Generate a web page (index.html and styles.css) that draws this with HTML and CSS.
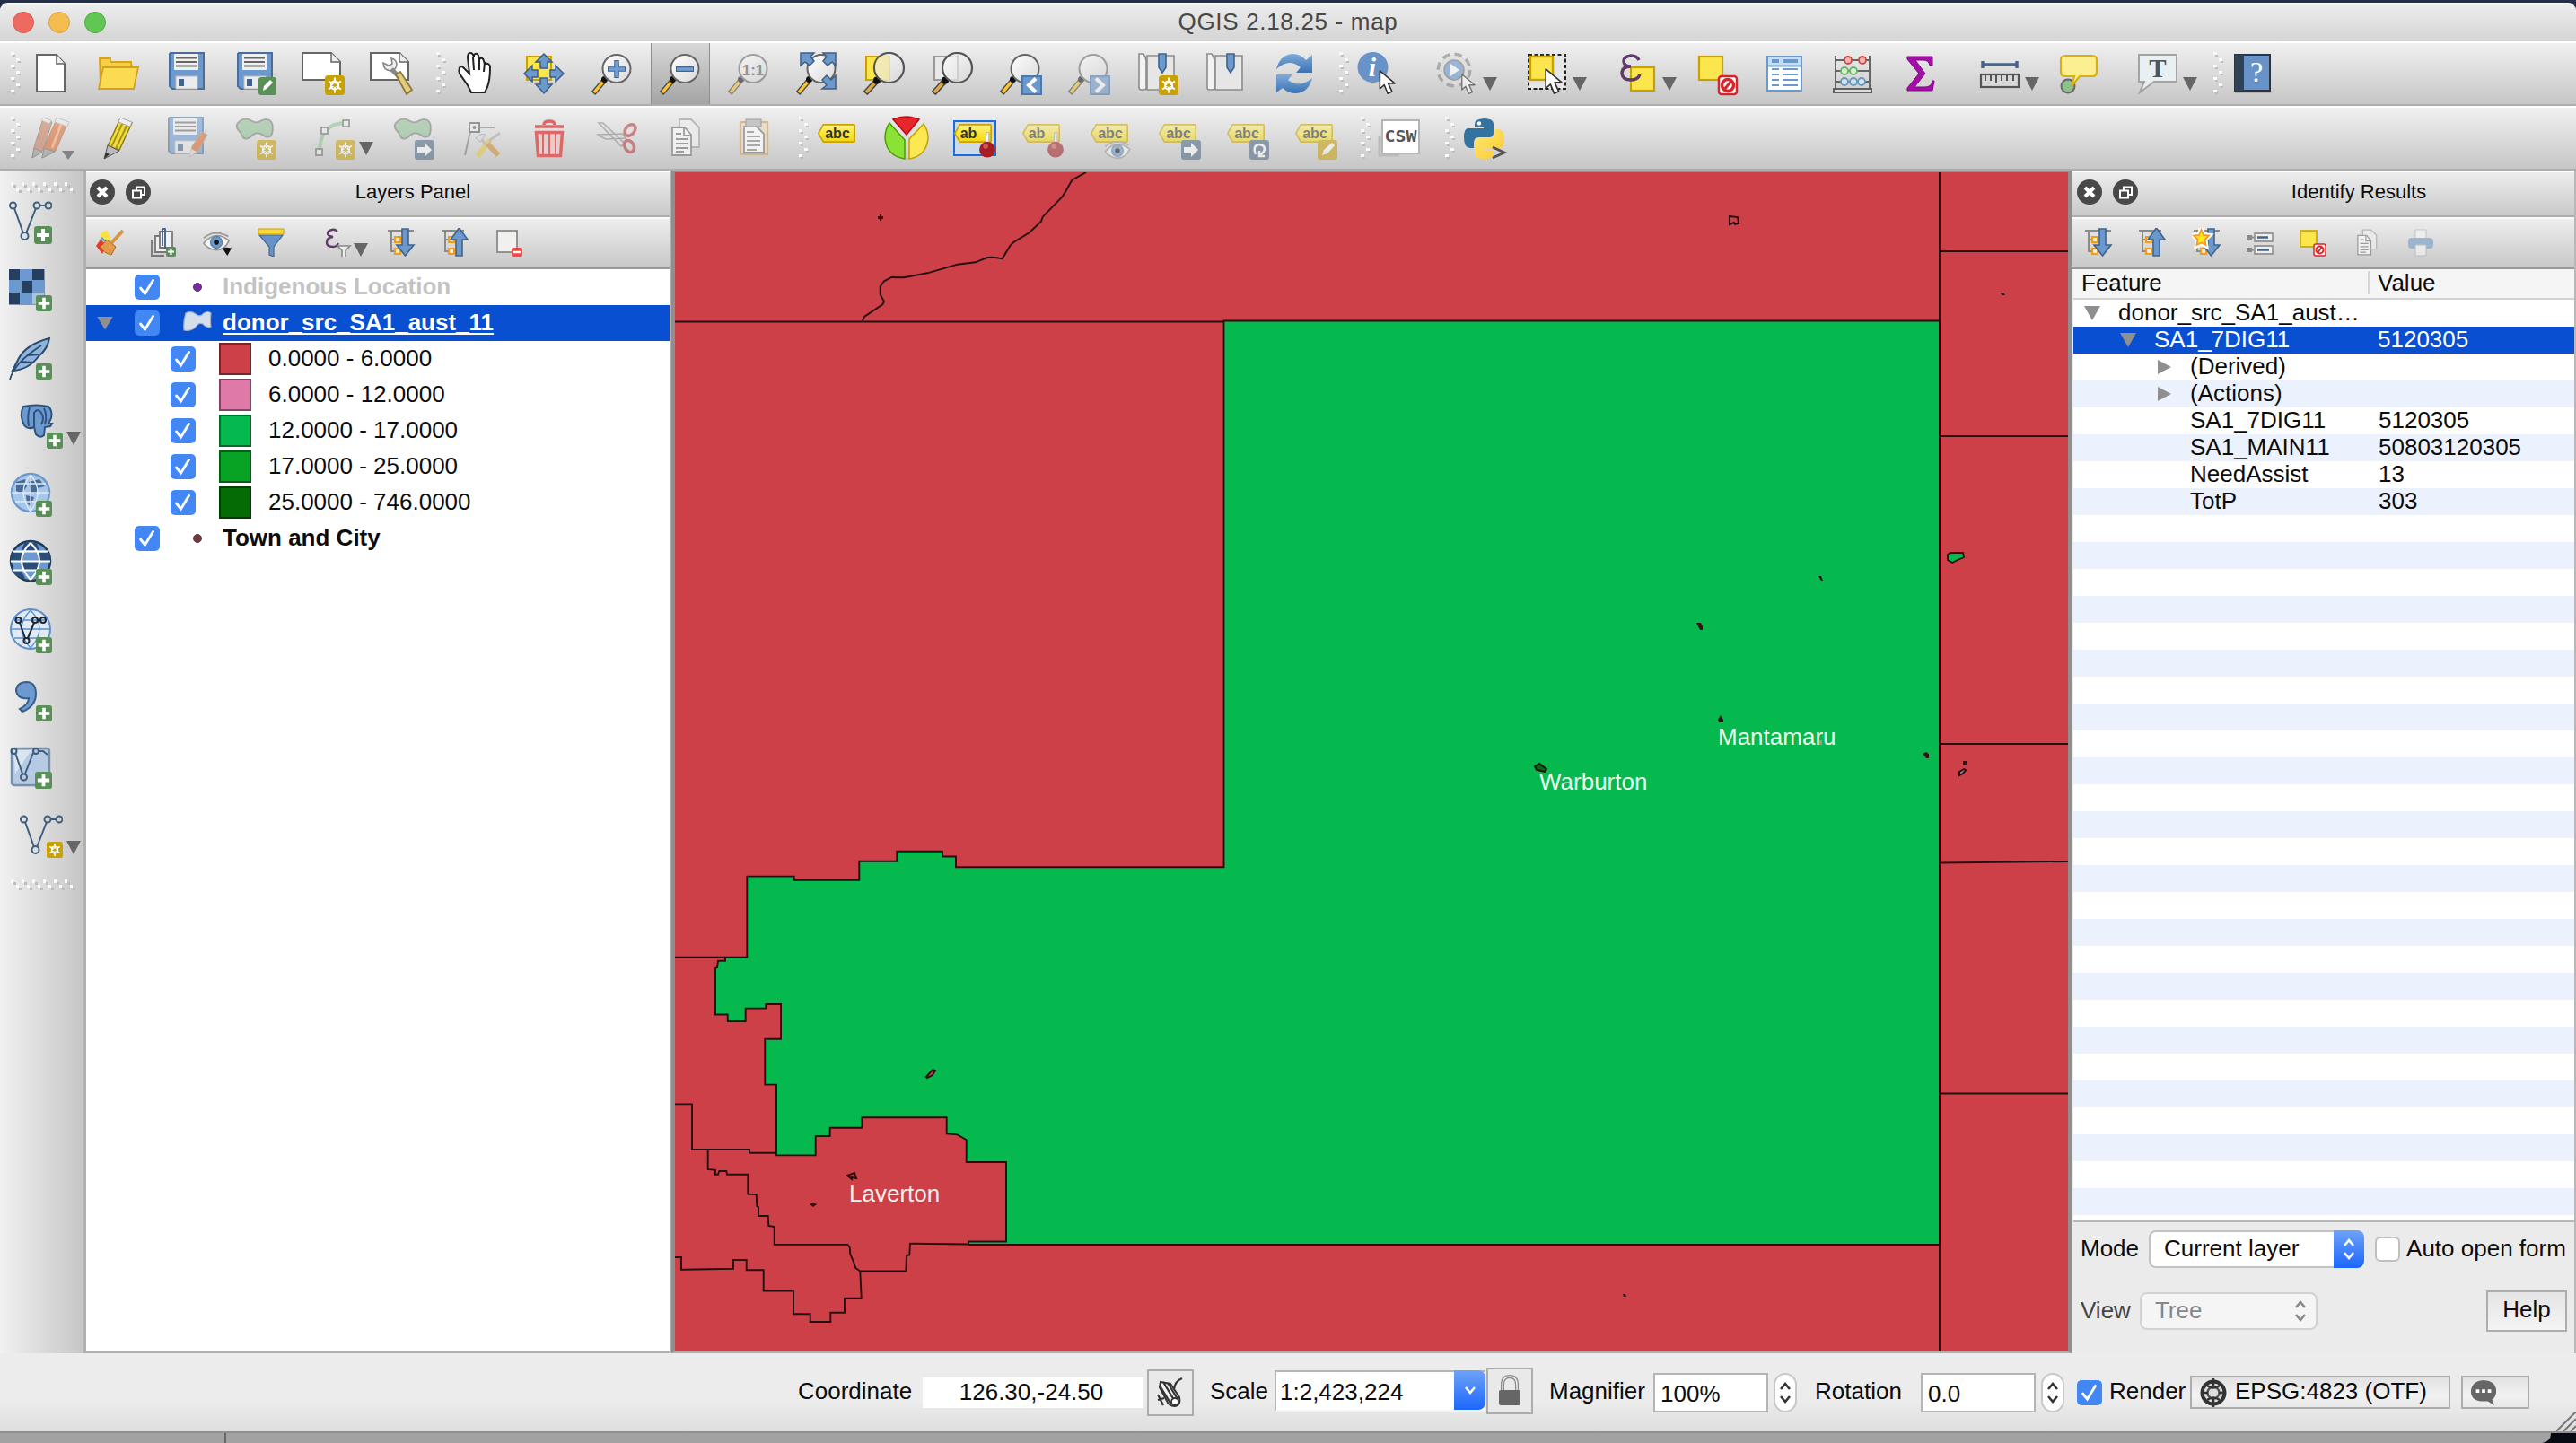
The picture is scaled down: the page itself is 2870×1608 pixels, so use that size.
FILE: index.html
```html
<!DOCTYPE html>
<html lang="en">
<head>
<meta charset="utf-8">
<title>QGIS 2.18.25 - map</title>
<link rel="stylesheet" href="styles.css">
</head>
<body>
<svg class="defs" width="0" height="0">
  <defs>
    <linearGradient id="lensFill" x1="0" y1="0" x2="1" y2="1"><stop offset="0" stop-color="#fff"/><stop offset="1" stop-color="#d9d9d9"/></linearGradient>
    <linearGradient id="tagFill" x1="0" y1="0" x2="0" y2="1"><stop offset="0" stop-color="#fdf08a"/><stop offset=".5" stop-color="#fae63c"/><stop offset="1" stop-color="#f2d60c"/></linearGradient>
    <linearGradient id="blueFill" x1="0" y1="0" x2="0" y2="1"><stop offset="0" stop-color="#7fabd9"/><stop offset="1" stop-color="#3a72b4"/></linearGradient>
    <linearGradient id="pyYellow" x1="0" y1="0" x2="1" y2="1"><stop offset="0" stop-color="#ffe873"/><stop offset="1" stop-color="#fdc92e"/></linearGradient>
    <symbol id="grip" viewBox="0 0 12 48"><g fill="#fafafa"><path d="M0 0h4v3H0zM6 7h4v3H6zM0 14h4v3H0zM6 21h4v3H6zM0 28h4v3H0zM6 35h4v3H6zM0 42h4v3H0z"/></g><g fill="#bdbdbd"><path d="M2 3h3v2H2zM8 10h3v2H8zM2 17h3v2H2zM8 24h3v2H8zM2 31h3v2H2zM8 38h3v2H8zM2 45h3v2H2z"/></g></symbol>
    <symbol id="hgrip" viewBox="0 0 74 12"><g fill="#fafafa"><path d="M0 0h3v4H0zM6 6h3v4H6zM12 0h3v4h-3zM18 6h3v4h-3zM24 0h3v4h-3zM30 6h3v4h-3zM36 0h3v4h-3zM42 6h3v4h-3zM48 0h3v4h-3zM54 6h3v4h-3zM60 0h3v4h-3zM66 6h3v4h-3z"/></g><g fill="#bdbdbd"><path d="M3 3h3v3H3zM9 9h3v3H9zM15 3h3v3h-3zM21 9h3v3h-3zM27 3h3v3h-3zM33 9h3v3h-3zM39 3h3v3h-3zM45 9h3v3h-3zM51 3h3v3h-3zM57 9h3v3h-3zM63 3h3v3h-3zM69 9h3v3h-3z"/></g></symbol>
    <symbol id="drop" viewBox="0 0 16 15"><path d="M0 0h16L8 15z" fill="#666"/></symbol>
    <symbol id="star" viewBox="0 0 22 22"><rect width="22" height="22" rx="3.500" fill="#c8a204"/><path d="M11 2.500V19.500M4 6.500l14 9M18 6.500l-14 9M7 8l4-2 4 2v6l-4 2-4-2z" stroke="#fff" stroke-width="2" fill="none"/><circle cx="11" cy="11" r="2" fill="#c8a204"/></symbol>
    <symbol id="plus" viewBox="0 0 20 20"><rect width="20" height="20" rx="3" fill="#589058"/><path d="M10 3v14M3 10h14" stroke="#fff" stroke-width="4"/></symbol>
    <symbol id="lens" viewBox="0 0 48 48"><path d="M15 32L3 46" stroke="#4a4a4a" stroke-width="6"/><path d="M14 33L4 45" stroke="#fcc42f" stroke-width="3.500"/><circle cx="15.500" cy="30.500" r="3.500" fill="#111"/><circle cx="29" cy="18.500" r="15.500" fill="url(#lensFill)" stroke="#666" stroke-width="2"/></symbol>
    <symbol id="biglens" viewBox="0 0 48 48"><path d="M14 33L2 46" stroke="#444" stroke-width="6.500"/><path d="M12 35L3 45" stroke="#d9a94a" stroke-width="3.500"/><circle cx="15" cy="31.500" r="4" fill="#111"/><circle cx="28.500" cy="17.500" r="16.500" fill="url(#lensFill)" fill-opacity=".75" stroke="#555" stroke-width="2.200"/></symbol>
    <symbol id="cursor" viewBox="0 0 24 32"><path d="M1 1v23l5.500-5 4.500 11 5.500-2.500-5-10.500h8.500z" fill="#fff" stroke="#333" stroke-width="1.800" stroke-linejoin="round"/></symbol>
    <symbol id="floppy" viewBox="0 0 48 48"><path d="M6 1h37v40H8l-3-3V2z" fill="#6c9ad0" stroke="#4a6e97" stroke-width="2"/><rect x="10" y="2" width="27" height="18" rx="1" fill="#f0f0f0"/><path d="M12 6.500h23M12 11h23M12 15.500h23" stroke="#666" stroke-width="2"/><rect x="12" y="27" width="24" height="14" fill="#ececec" stroke="#bbb"/><rect x="15" y="30" width="6" height="8" fill="#3f648f"/></symbol>
    <symbol id="sheet" viewBox="0 0 48 48"><path d="M1 1h32l10 10v20H1z" fill="#fff" stroke="#666" stroke-width="2"/><path d="M33 1v10h10" fill="#eee" stroke="#666" stroke-width="1.500"/></symbol>
    <symbol id="book" viewBox="0 0 48 48"><path d="M12 4h30v38H12z" fill="#e6e6e6" stroke="#8c8c8c" stroke-width="1.600"/><path d="M3 2h5q3 4 3 8v30q0 2-3 2H5q-2 0-2-3z" fill="#f2f2f2" stroke="#8c8c8c" stroke-width="1.600"/><path d="M25 2h8v15l-4 6-4-6z" fill="#6b99cc" stroke="#3f648f" stroke-width="1.600"/></symbol>
    <symbol id="tag" viewBox="0 0 48 24"><path d="M8 1h37q1 0 1 1v19q0 1-1 1H8L2 11.500z" fill="url(#tagFill)" stroke="#c8a204" stroke-width="1.800"/></symbol>
    <symbol id="blob" viewBox="0 0 48 28"><path d="M8 3Q14 0 20 4T33 3Q43 0 45 9 46 18 43 22 38 25 32 20 26 17 21 21 14 28 10 24 8 19 4 15-1 8 8 3z" fill="#8dc293" stroke="#777" stroke-width="2"/></symbol>
    <symbol id="vee" viewBox="0 0 48 48"><g fill="none" stroke="#3f5d7d" stroke-width="2"><path d="M6 8l10 28M19 36L30 8M34 5h7"/><circle cx="4.500" cy="5" r="3.500"/><circle cx="17.500" cy="39" r="4"/><circle cx="31" cy="5" r="3.500"/><circle cx="44" cy="5" r="3.500"/></g></symbol>
    <symbol id="expand" viewBox="0 0 32 32"><path d="M1 3h29M5 3v24M5 13h6M5 26h6" stroke="#8a8a8a" stroke-width="2" fill="none"/><path d="M9 10h6v6H9zM9 23h6v6H9z" fill="#fff2d0" stroke="#f59a1c" stroke-width="2.200"/><path d="M17 1h7v18h6L20.500 31 11 19h6z" fill="#6b99cc" stroke="#3f648f" stroke-width="1.600"/></symbol>
    <symbol id="collapse" viewBox="0 0 32 32"><path d="M1 3h25M5 3v24M5 13h6M5 26h6" stroke="#8a8a8a" stroke-width="2" fill="none"/><path d="M9 10h6v6H9zM9 23h6v6H9z" fill="#fff2d0" stroke="#f59a1c" stroke-width="2.200"/><path d="M17 31h7V13h6L20.500 0 11 13h6z" fill="#6b99cc" stroke="#3f648f" stroke-width="1.600"/></symbol>
    <symbol id="check" viewBox="0 0 28 28"><rect width="28" height="28" rx="5" fill="#4387f4"/><path d="M6.500 15l5 6L20.500 6.500" fill="none" stroke="#fff" stroke-width="2.800" stroke-linecap="round"/></symbol>
    <symbol id="close" viewBox="0 0 28 28"><circle cx="14" cy="14" r="14" fill="#484848"/><path d="M9 9l10 10M19 9L9 19" stroke="#fff" stroke-width="4"/></symbol>
    <symbol id="float" viewBox="0 0 28 28"><circle cx="14" cy="14" r="14" fill="#484848"/><path d="M12 12V8.500h9V17h-4" fill="none" stroke="#fff" stroke-width="2"/><rect x="8" y="12.500" width="9" height="8" fill="none" stroke="#fff" stroke-width="2"/></symbol>
    <symbol id="updown" viewBox="0 0 16 28"><path d="M3 10l5-6 5 6M3 18l5 6 5-6" fill="none" stroke="currentColor" stroke-width="2.600"/></symbol>
    <symbol id="pages" viewBox="0 0 48 48"><path d="M17 3h13l9 9v22H17z" fill="#eee" stroke="#aaa" stroke-width="1.800"/><path d="M9 12h14l7 8v23H9z" fill="#f8f8f8" stroke="#888" stroke-width="1.800"/><path d="M22 12v9h8M13 19h6M13 25h13M13 30h13M13 35h13M13 39h9" fill="none" stroke="#888" stroke-width="1.800"/></symbol>
    <symbol id="gobadge" viewBox="0 0 22 22"><rect width="22" height="22" rx="3" fill="#4b6883"/><path d="M3 8h8V3l8 8-8 8v-5H3z" fill="#fff"/></symbol>
    <symbol id="pin" viewBox="0 0 20 32"><path d="M9 0h3v14H8z" fill="#fff" stroke="#999" stroke-width="1"/><circle cx="10" cy="21" r="9.500" fill="#a51d22"/><circle cx="8" cy="17" r="3" fill="#c65a5c"/></symbol>
    <symbol id="eye" viewBox="0 0 32 24"><path d="M1 13Q15-3 31 10 26 22 14 21 5 19 1 13z" fill="#f4f4f4" stroke="#999" stroke-width="1.800"/><path d="M1 7Q14-4 30 5" fill="none" stroke="#999" stroke-width="2"/><circle cx="16" cy="12" r="7" fill="#6b99cc" stroke="#5b7da5" stroke-width="1.200"/><circle cx="16" cy="12" r="3" fill="#10151c"/></symbol>
  </defs>
</svg>

<div class="window">
  <header class="titlebar">
    <div class="lights"><i class="light red"></i><i class="light amber"></i><i class="light green"></i></div>
    <h1 class="window-title">QGIS 2.18.25 - map</h1>
  </header>

  <div class="toolbar">
    <span class="slot"><svg class="grip"><use href="#grip"/></svg></span>
    <span class="btn"><svg class="icon" viewBox="0 0 48 48"><path d="M9 3h22l9 10v31H9z" fill="#fff" stroke="#666" stroke-width="2"/><path d="M31 3v10h9" fill="#eee" stroke="#666" stroke-width="1.600"/></svg></span>
    <span class="btn"><svg class="icon" viewBox="0 0 48 48"><path d="M3 7h12v4h23l1 7H8L4 40z" fill="#f7cf45" stroke="#d3a21f" stroke-width="1.800"/><path d="M7 17h39l-5 24H2z" fill="#fbdb52" stroke="#d3a21f" stroke-width="1.800"/></svg></span>
    <span class="btn"><svg class="icon" viewBox="0 0 48 48"><use href="#floppy"/></svg></span>
    <span class="btn"><svg class="icon" viewBox="0 0 48 48"><use href="#floppy"/><rect x="28" y="28" width="20" height="20" rx="3" fill="#589058"/><path d="M33 43l1-5 7-7 3 3-7 7z" fill="#fff"/></svg></span>
    <span class="btn"><svg class="icon" viewBox="0 0 48 48"><use href="#sheet"/><use href="#star" x="26" y="26" width="22" height="22"/></svg></span>
    <span class="btn"><svg class="icon" viewBox="0 0 48 48"><use href="#sheet"/><path d="M15 12q0 8 8 9 7-1 7-8-1-5-6-6l1 6-4 2z" fill="#eee" stroke="#888" stroke-width="1.600"/><path d="M24 19l8 8" stroke="#888" stroke-width="5"/><path d="M29 25l5-3 13 20-6 5z" fill="#e3cd7d" stroke="#8d7a3c" stroke-width="1.800"/></svg></span>
    <span class="slot"><svg class="grip"><use href="#grip"/></svg></span>
    <span class="btn"><svg class="icon" viewBox="0 0 48 48"><path d="M19 45l-4-8-9-13q-2-8 3-8l8 8-2-18q0-5 3-5t4 5V3q3-3 5 1l1 4q4-3 5 2l1 3q6-1 6 4 0 14-3 22l-3 6z" fill="#fff" stroke="#222" stroke-width="2"/><path d="M21 6l1 14M28 8v12M34 11l-1 11" stroke="#222" stroke-width="2"/></svg></span>
    <span class="btn"><svg class="icon" viewBox="0 0 48 48"><rect x="5" y="5" width="27" height="26" fill="#fbe74d" stroke="#c8a204" stroke-width="2"/><g fill="#6b99cc" stroke="#3b5e8a" stroke-width="1.500"><path d="M24 2l9 9h-5v7h-8v-7h-5z"/><path d="M24 46l9-10h-5v-7h-8v7h-5z"/><path d="M2 24l9-9v5h6v8h-6v5z"/><path d="M46 24l-9-9v5h-6v8h6v5z"/></g></svg></span>
    <span class="btn"><svg class="icon" viewBox="0 0 48 48"><use href="#lens"/><path d="M29 9v20M19 19h20" stroke="#3f648f" stroke-width="5.500"/><path d="M29 10v18M20 19h18" stroke="#6f9fd4" stroke-width="3.500"/></svg></span>
    <span class="btn pressed"><svg class="icon" viewBox="0 0 48 48"><use href="#lens"/><path d="M19 19h20" stroke="#3f648f" stroke-width="6"/><path d="M20 19h18" stroke="#6f9fd4" stroke-width="3.500"/></svg></span>
    <span class="btn dim"><svg class="icon" viewBox="0 0 48 48"><use href="#lens"/><text x="29" y="26" class="one" text-anchor="middle">1:1</text></svg></span>
    <span class="btn"><svg class="icon" viewBox="0 0 48 48"><use href="#lens"/><g fill="#6b99cc" stroke="#3f5d85" stroke-width="1.500"><path d="M6 1h15l-4 4 4 5-5 5-5-4-5 4z"/><path d="M45 1v14l-4-4-5 4-5-5 4-5-4-4z"/><path d="M45 41H30l5-4-5-6 5-5 5 5 5-5z"/></g></svg></span>
    <span class="btn"><svg class="icon" viewBox="0 0 48 48"><rect x="3" y="5" width="26" height="26" fill="#fbe74d" stroke="#c8a204" stroke-width="2"/><use href="#biglens"/><path d="M17 6q5-3 12-3v29q-8 0-12-4-8-12 0-22z" fill="#f0e6a8" opacity=".7"/></svg></span>
    <span class="btn"><svg class="icon" viewBox="0 0 48 48"><rect x="3" y="5" width="26" height="26" fill="#e8e8e8" stroke="#999" stroke-width="2"/><use href="#biglens"/><path d="M29 2v31" stroke="#ccc" stroke-width="1.500"/></svg></span>
    <span class="btn"><svg class="icon" viewBox="0 0 48 48"><use href="#lens" x="-1" y="0"/><rect x="25" y="27" width="21" height="20" fill="#6b99cc" stroke="#4c78ad" stroke-width="2"/><path d="M40 29.500l-8 7.500 8 7.500" fill="none" stroke="#fff" stroke-width="4"/></svg></span>
    <span class="btn dim"><svg class="icon" viewBox="0 0 48 48"><use href="#lens" x="-1" y="0"/><rect x="25" y="27" width="21" height="20" fill="#6b99cc" stroke="#4c78ad" stroke-width="2"/><path d="M31 29.500l8 7.500-8 7.500" fill="none" stroke="#fff" stroke-width="4"/></svg></span>
    <span class="btn"><svg class="icon" viewBox="0 0 48 48"><use href="#book"/><use href="#star" x="25" y="26" width="22" height="22"/></svg></span>
    <span class="btn"><svg class="icon" viewBox="0 0 48 48"><use href="#book"/></svg></span>
    <span class="btn"><svg class="icon" viewBox="0 0 48 48"><path d="M4 19Q8 3 22 2q9 0 15 7l7-6v20H26l5-6Q18 6 4 19z" fill="url(#blueFill)"/><path d="M44 29Q40 45 26 46q-9 0-15-6l-7 5V25h18l-5 6q12 10 27-2z" fill="url(#blueFill)"/></svg></span>
    <span class="slot"><svg class="grip"><use href="#grip"/></svg></span>
    <span class="btn"><svg class="icon" viewBox="0 0 48 48"><circle cx="17.500" cy="17" r="17" fill="#6793c9"/><text x="17" y="27" class="info" text-anchor="middle">i</text><use href="#cursor" x="24" y="20" width="22" height="28"/></svg></span>
    <span class="btn wide"><svg class="icon gear" viewBox="0 0 48 48"><circle cx="20" cy="20" r="17" fill="#ddd" stroke="#888" stroke-width="5" stroke-dasharray="8 5.350"/><circle cx="20" cy="20" r="16" fill="#dedede"/><circle cx="20" cy="20" r="11" fill="#6c9ad0" stroke="#777" stroke-width="1.500"/><path d="M16 13l10 7-10 7z" fill="#fff"/><use href="#cursor" x="27" y="24" width="20" height="24"/></svg><svg class="drop"><use href="#drop"/></svg></span>
    <span class="btn wide"><svg class="icon" viewBox="0 0 48 48"><rect x="3" y="3" width="41" height="38" fill="#e6e6e6" stroke="#222" stroke-width="2" stroke-dasharray="4 2.500"/><rect x="5" y="5" width="25" height="26" fill="#fbe74d" stroke="#c8a204" stroke-width="2.400"/><use href="#cursor" x="19" y="18" width="27" height="30"/></svg><svg class="drop"><use href="#drop"/></svg></span>
    <span class="btn wide"><svg class="icon" viewBox="0 0 48 48"><rect x="17" y="17" width="26" height="26" fill="#fbe74d" stroke="#c8a204" stroke-width="2.200"/><path d="M26 9q-2-5-9-5-8 1-8 6 0 6 8 6-10 0-10 8 1 7 10 7 8 0 10-6" fill="none" stroke="#5d3a68" stroke-width="3.500"/></svg><svg class="drop"><use href="#drop"/></svg></span>
    <span class="btn"><svg class="icon" viewBox="0 0 48 48"><rect x="5" y="5" width="26" height="26" fill="#fbe74d" stroke="#c8a204" stroke-width="2.200"/><rect x="27" y="27" width="20" height="20" rx="3" fill="#fff" stroke="#d8252a" stroke-width="2.500"/><circle cx="37" cy="37" r="6.500" fill="none" stroke="#d8252a" stroke-width="3.500"/><path d="M33 42l8-10" stroke="#d8252a" stroke-width="3"/></svg></span>
    <span class="btn"><svg class="icon" viewBox="0 0 48 48"><rect x="5" y="5" width="38" height="38" fill="#fff" stroke="#6b99cc" stroke-width="2"/><rect x="6" y="6" width="36" height="9" fill="#c5def2"/><path d="M5 15.500h38" stroke="#6b99cc" stroke-width="2"/><path d="M10 10h8M22 10h17" stroke="#6b99cc" stroke-width="4"/><path d="M10 19h8M22 19h17M10 25h8M22 25h17M10 31h8M22 31h17M10 37h8M22 37h17" stroke="#6b99cc" stroke-width="2"/></svg></span>
    <span class="btn"><svg class="icon" viewBox="0 0 48 48"><path d="M5 4v37M43 4v37M5 9h38M5 21h38M5 33h38" stroke="#666" stroke-width="2"/><rect x="3" y="41" width="42" height="4" fill="#ddd" stroke="#555" stroke-width="1.800"/><g stroke-width="1.800"><g fill="#f0b5b0" stroke="#c64b4b"><circle cx="19" cy="9" r="4"/><circle cx="35" cy="9" r="4"/></g><g fill="#d3efce" stroke="#72b372"><circle cx="15" cy="21" r="4"/><circle cx="25" cy="21" r="4"/></g><g fill="#cfe2f2" stroke="#6b99bc"><circle cx="15" cy="33" r="4"/><circle cx="25" cy="33" r="4"/><circle cx="34" cy="33" r="4"/></g></g></svg></span>
    <span class="btn"><svg class="icon" viewBox="0 0 48 48"><path d="M9 5h28v10h-3q-1-6-7-6h-9l11 15-12 15h12q7 0 8-7h2l-2 11H9v-3l13-16L9 8z" fill="#a50da8" stroke="#7c0a80" stroke-width="1"/></svg></span>
    <span class="btn wide"><svg class="icon" viewBox="0 0 48 48"><path d="M5 14h38M5 10v8M43 10v8" stroke="#4a6587" stroke-width="3.500"/><rect x="3" y="25" width="42" height="14" fill="#d8d8d8" stroke="#555" stroke-width="2.200"/><path d="M8 26v6M14 26v6M20 26v9M26 26v6M32 26v6M39 26v6" stroke="#555" stroke-width="2"/></svg><svg class="drop"><use href="#drop"/></svg></span>
    <span class="btn"><svg class="icon" viewBox="0 0 48 48"><circle cx="12" cy="38" r="7.500" fill="#8dc08d" stroke="#666" stroke-width="2"/><path d="M9 4h30q5 0 5 5v13q0 5-5 5h-14l-9 11 3-11h-10q-5 0-5-5V9q0-5 5-5z" fill="#fbef8f" stroke="#d8b010" stroke-width="2.200"/></svg></span>
    <span class="btn wide"><svg class="icon" viewBox="0 0 48 48"><path d="M3 3h42v30H20L4 45l5-12H3z" fill="#e9f0f3" stroke="#a3a3a3" stroke-width="2"/><text x="24" y="28" class="tee" text-anchor="middle">T</text></svg><svg class="drop"><use href="#drop"/></svg></span>
    <span class="slot"><svg class="grip"><use href="#grip"/></svg></span>
    <span class="btn"><svg class="icon" viewBox="0 0 48 48"><path d="M4 44h40" stroke="#999" stroke-width="3"/><rect x="4" y="3" width="39" height="40" fill="#6793c9" stroke="#2a3444" stroke-width="2"/><path d="M4 3h10v40H4z" fill="#2f4256"/><text x="28" y="33" class="qmark" text-anchor="middle">?</text></svg></span>
  </div>

  <div class="toolbar">
    <span class="slot"><svg class="grip"><use href="#grip"/></svg></span>
    <span class="btn dim"><svg class="icon" viewBox="0 0 48 48"><path d="M4 46l2-12L16 2l10 4-10 31z" fill="#c77c5c" stroke="#8a6a58"/><path d="M15 46l2-12L31 3l12 5-13 30z" fill="#e0662a" stroke="#8a6a58"/><path d="M26 35L37 6" stroke="#f3a973" stroke-width="3"/><path d="M31 1l14 5-2 5-14-5zM16 1l9 3-2 4-9-4z" fill="#eee" stroke="#aaa"/><path d="M15 46l2-11 12 4zM4 46l2-11 9 4z" fill="#999" stroke="#666"/><path d="M37 38h14l-7 10z" fill="#444"/></svg></span>
    <span class="btn"><svg class="icon" viewBox="0 0 48 48"><path d="M12 33L26 2l13 5-14 30z" fill="#f0dc3c" stroke="#8e7b13" stroke-width="1.500"/><path d="M16 34L30 4M21 36L35 6" stroke="#a8951b" stroke-width="2"/><path d="M26 1l13 5-2 5-13-5z" fill="#eee" stroke="#aaa"/><path d="M8 47l4-15 13 6z" fill="#bbb" stroke="#555"/><path d="M8 47l2-7 4 2z" fill="#333"/></svg></span>
    <span class="btn dim"><svg class="icon" viewBox="0 0 48 48"><use href="#floppy" x="-1"/><path d="M27 45l3-12 11-16 6 3-10 18z" fill="#e0662a" stroke="#999"/><path d="M27 45l2-9 6 3z" fill="#ddd"/></svg></span>
    <span class="btn dim"><svg class="icon" viewBox="0 0 48 48"><use href="#blob" x="1" y="1" width="46" height="26"/><use href="#star" x="26" y="26" width="22" height="22"/></svg></span>
    <span class="btn wide"><svg class="icon dim" viewBox="0 0 48 48"><path d="M8 40Q8 8 36 7" fill="none" stroke="#8dc293" stroke-width="4"/><g fill="#eee" stroke="#666" stroke-width="1.800"><rect x="4" y="36" width="7" height="7"/><rect x="10" y="12" width="7" height="7"/><rect x="34" y="4" width="7" height="7"/></g><use href="#star" x="26" y="26" width="22" height="22"/></svg><svg class="drop"><use href="#drop"/></svg></span>
    <span class="btn dim"><svg class="icon" viewBox="0 0 48 48"><use href="#blob" x="1" y="1" width="46" height="26"/><use href="#gobadge" x="26" y="26" width="22" height="22"/></svg></span>
    <span class="btn dim"><svg class="icon" viewBox="0 0 48 48"><path d="M6 43L12 16M19 12h20" stroke="#777" stroke-width="2"/><rect x="11" y="7" width="11" height="10" fill="#eee" stroke="#555" stroke-width="2"/><circle cx="16.500" cy="12" r="2" fill="#555"/><path d="M20 44l14-18" stroke="#e6c83a" stroke-width="6"/><path d="M33 27l12-9M29 31l-7-9" stroke="#aaa" stroke-width="3"/><path d="M31 30l12 13" stroke="#d08a30" stroke-width="6"/><path d="M18 24q5-6 11-4l-6 8z" fill="#ddd" stroke="#999"/></svg></span>
    <span class="btn"><svg class="icon" viewBox="0 0 48 48"><path d="M8 11h32M18 9q0-4 6-4t6 4" fill="none" stroke="#dc6868" stroke-width="3.500"/><path d="M9.500 17.500h29l-2 26h-25z" fill="#e6cdcd" stroke="#dc6868" stroke-width="3.500"/><path d="M17 19v23M24 19v23M31 19v23" stroke="#dc6868" stroke-width="2"/></svg></span>
    <span class="btn dim"><svg class="icon" viewBox="0 0 48 48"><path d="M3 7l5 0 24 23-4 3zM1 20l29-1 3 5-22 1z" fill="#ddd" stroke="#888" stroke-width="1.600"/><ellipse cx="38" cy="15" rx="5" ry="7" transform="rotate(40 38 15)" fill="none" stroke="#b8363c" stroke-width="3.500"/><ellipse cx="37" cy="33" rx="5" ry="7" transform="rotate(-30 37 33)" fill="none" stroke="#b8363c" stroke-width="3.500"/></svg></span>
    <span class="btn soft"><svg class="icon" viewBox="0 0 48 48"><use href="#pages"/></svg></span>
    <span class="btn soft"><svg class="icon" viewBox="0 0 48 48"><rect x="9" y="6" width="30" height="36" fill="#ecdcc6" stroke="#d1ab78" stroke-width="2.200"/><path d="M13 11h14l8 8v21H13z" fill="#fafafa" stroke="#888" stroke-width="1.800"/><rect x="15" y="3" width="17" height="8" fill="#bbb" stroke="#888"/><path d="M16 17h8M16 22h15M16 27h15M16 32h15M16 37h11" stroke="#999" stroke-width="1.800"/></svg></span>
    <span class="slot"><svg class="grip"><use href="#grip"/></svg></span>
    <span class="btn"><svg class="icon" viewBox="0 0 48 48"><use href="#tag" x="0" y="8" width="44" height="22"/><text x="23" y="24" class="abc" text-anchor="middle">abc</text></svg></span>
    <span class="btn"><svg class="icon" viewBox="0 0 48 48"><path d="M9 3q14-6 29 0L24 20z" fill="#e8252a" stroke="#b01217" stroke-width="1.500"/><path d="M5 7l17 19v21Q2 44 0 24 0 14 5 7z" fill="#8ae234" stroke="#4e9a06" stroke-width="1.500"/><path d="M43 8L27 25v22q19-3 21-23 0-9-5-16z" fill="#fce94f" stroke="#c4a000" stroke-width="1.500"/></svg></span>
    <span class="btn"><svg class="icon" viewBox="0 0 48 48"><rect x="1" y="5" width="46" height="38" fill="#cfdae6" stroke="#1a6be0" stroke-width="2"/><use href="#tag" x="0" y="8" width="44" height="22"/><text x="17" y="24" class="abc" text-anchor="middle">ab</text><use href="#pin" x="28" y="17" width="20" height="30"/></svg></span>
    <span class="btn dim"><svg class="icon" viewBox="0 0 48 48"><use href="#tag" x="0" y="8" width="44" height="22"/><text x="17" y="24" class="abc" text-anchor="middle">ab</text><use href="#pin" x="28" y="17" width="20" height="30"/></svg></span>
    <span class="btn dim"><svg class="icon" viewBox="0 0 48 48"><use href="#tag" x="0" y="8" width="44" height="22"/><text x="23" y="24" class="abc" text-anchor="middle">abc</text><use href="#eye" x="15" y="27" width="32" height="22"/></svg></span>
    <span class="btn dim"><svg class="icon" viewBox="0 0 48 48"><use href="#tag" x="0" y="8" width="44" height="22"/><text x="23" y="24" class="abc" text-anchor="middle">abc</text><use href="#gobadge" x="26" y="26" width="22" height="22"/></svg></span>
    <span class="btn dim"><svg class="icon" viewBox="0 0 48 48"><use href="#tag" x="0" y="8" width="44" height="22"/><text x="23" y="24" class="abc" text-anchor="middle">abc</text><rect x="26" y="26" width="22" height="22" rx="3" fill="#4b6883"/><path d="M33 42q-4-10 4-11 8 1 5 8l-5 5M37 38v6h6" fill="none" stroke="#fff" stroke-width="2.500"/></svg></span>
    <span class="btn dim"><svg class="icon" viewBox="0 0 48 48"><use href="#tag" x="0" y="8" width="44" height="22"/><text x="23" y="24" class="abc" text-anchor="middle">abc</text><rect x="26" y="26" width="22" height="22" rx="3" fill="#c8a204"/><path d="M31 43l2-6 9-8 3 3-8 9z" fill="#fff"/></svg></span>
    <span class="slot"><svg class="grip"><use href="#grip"/></svg></span>
    <span class="btn"><svg class="icon" viewBox="0 0 48 48"><path d="M1 22v21h22" fill="none" stroke="#bbb" stroke-width="3"/><rect x="4" y="4" width="41" height="37" fill="#fff" stroke="#b5b5b5" stroke-width="2"/><text x="24.500" y="28" class="csw" text-anchor="middle" textLength="36" lengthAdjust="spacingAndGlyphs">CSW</text></svg></span>
    <span class="slot"><svg class="grip"><use href="#grip"/></svg></span>
    <span class="btn"><svg class="icon" viewBox="0 0 48 48"><path d="M13 12V8q0-5 10-6 11 0 11 6v10q0 5-5 5H18q-6 0-6 6v6H8q-7 0-7-12t7-10h15v-1z" fill="#34729f"/><circle cx="18" cy="7.500" r="2.200" fill="#fff"/><path d="M36 14h3q7 0 7 11t-7 11H24v2h10v4q-1 5-10 5-11 0-11-6V30q0-6 6-6h10q6 0 6-6z" fill="url(#pyYellow)"/><path d="M33 34l13 6-13 6" fill="none" stroke="#555" stroke-width="2.800"/></svg></span>
  </div>

  <main class="workspace">
    <aside class="sidebar">
      <svg class="hgrip"><use href="#hgrip"/></svg>
      <div class="side-item"><svg class="icon" viewBox="0 0 48 48"><use href="#vee"/><use href="#plus" x="28" y="28" width="20" height="20"/></svg></div>
      <div class="side-item"><svg class="icon" viewBox="0 0 48 48"><rect width="40" height="40" fill="#6c9ad0"/><path d="M0 0h12v12H0zM26 0h13v12H26zM14 13h12v13H14zM0 26h12v13H0z" fill="#263f5e"/><path d="M26 26h13v13H26z" fill="#a9c2df"/><use href="#plus" x="30" y="29" width="18" height="18"/></svg></div>
      <div class="side-item"><svg class="icon" viewBox="0 0 48 48"><path d="M45 1Q18 8 10 25L4 37Q22 36 33 21 43 13 45 1z" fill="#8fb4de" stroke="#2d4b6d" stroke-width="2"/><path d="M1 47Q6 28 36 9M13 27l14 1M20 20l14-1" fill="none" stroke="#2d4b6d" stroke-width="1.800"/><use href="#plus" x="30" y="29" width="18" height="18"/></svg></div>
      <div class="side-item shifted"><svg class="icon" viewBox="0 0 48 48"><path d="M4 1Q18-2 32 1 37 6 35 14L32 20H36L34 23 28 24 27 33Q23 37 18 32L16 24Q9 27 5 22-1 10 4 1z" fill="#6c9ad0" stroke="#2f527d" stroke-width="2"/><path d="M11 2q-3 10-1 21M16 24V8q4-6 8 0 4 6 0 13M27 3q4 8 1 18" fill="none" stroke="#2f527d" stroke-width="2"/><use href="#plus" x="30" y="30" width="18" height="18"/></svg><svg class="drop"><use href="#drop"/></svg></div>
      <div class="side-item"><svg class="icon" viewBox="0 0 48 48"><circle cx="24" cy="21" r="21" fill="#a8c6e8" stroke="#6b99cc" stroke-width="2.400"/><path d="M8 9l10-3 2 8-6 8-6-3zM22 9l12-3 6 8-8 2-2 7-6-2zM19 24l9 2-4 10-4-3z" fill="#30557f" opacity=".8"/><path d="M3 21h42M7 31h34M7 11h34M24 1v41M24 1q-16 19 0 41M24 1q16 19 0 41" fill="none" stroke="#dceaf8" stroke-width="1.300"/><use href="#plus" x="30" y="30" width="18" height="18"/></svg></div>
      <div class="side-item"><svg class="icon" viewBox="0 0 48 48"><circle cx="24" cy="21" r="22" fill="#6c9ad0" stroke="#243b59" stroke-width="2.500"/><path d="M17 1h14l3 8H14zM3 12h11v9H2zM15 22h18v9H15zM34 12h11l1 9H34zM3 32h11l4 9Q8 40 3 32z" fill="#2c4d78"/><path d="M2 21.500h44M5 10.500h38M5 31.500h38M24 1Q4 20 24 42M24 1q20 19 0 41" fill="none" stroke="#fff" stroke-width="2"/><use href="#plus" x="30" y="30" width="18" height="18"/></svg></div>
      <div class="side-item"><svg class="icon" viewBox="0 0 48 48"><circle cx="24" cy="21" r="22" fill="#e2eaf3" stroke="#5a8fd0" stroke-width="2"/><path d="M2 21h44M6 11h36M6 31h36M24 0Q4 20 24 42M24 0q20 20 0 42" fill="none" stroke="#5a8fd0" stroke-width="1.300"/><g fill="none" stroke="#1c2733" stroke-width="2"><path d="M12 14l6 17M21 31l7-17M32 11h3"/><circle cx="10.500" cy="11" r="3"/><circle cx="19.500" cy="34" r="3"/><circle cx="29" cy="11" r="3"/><circle cx="38" cy="11" r="3"/></g><use href="#plus" x="30" y="30" width="18" height="18"/></svg></div>
      <div class="side-item"><svg class="icon" viewBox="0 0 48 48"><path d="M19 4q11 0 11 13 0 14-15 20l-3-3q10-5 10-12-12 2-14-8 0-9 11-10z" fill="#6c9ad0" stroke="#3a5f8d" stroke-width="2"/><use href="#plus" x="30" y="30" width="18" height="18"/></svg></div>
      <div class="side-item"><svg class="icon" viewBox="0 0 48 48"><rect x="3" y="2" width="42" height="41" rx="3" fill="#b6cbe3" stroke="#7890ac" stroke-width="2.400"/><path d="M5 4h20L7 30z" fill="#dbe5f0"/><g fill="none" stroke="#3f5d7d" stroke-width="2"><path d="M7 7l8 23M18 30l9-23M33 5h5l5 4"/><circle cx="5.500" cy="5" r="3"/><circle cx="16.500" cy="34" r="3.500"/><circle cx="30" cy="5" r="3"/></g><use href="#plus" x="29" y="28" width="19" height="19"/></svg></div>
      <div class="side-item shifted"><svg class="icon" viewBox="0 0 48 48"><use href="#vee"/><use href="#star" x="30" y="30" width="18" height="18"/></svg><svg class="drop"><use href="#drop"/></svg></div>
      <svg class="hgrip last"><use href="#hgrip"/></svg>
    </aside>

    <section class="panel layers">
      <div class="panel-head"><svg class="round"><use href="#close"/></svg><svg class="round"><use href="#float"/></svg><h2 class="panel-title">Layers Panel</h2></div>
      <div class="panel-tools">
        <span class="ptool"><svg viewBox="0 0 32 32"><path d="M5 7l8-5 5 10-9 4z" fill="#fae14a"/><path d="M1 20l5-7 7 6-5 10z" fill="#e8392e"/><path d="M4 14l4-4 4 5z" fill="#6b99cc"/><path d="M13 13l10 8-5 9Q9 28 6 21z" fill="#e39b45" stroke="#a8641c"/><path d="M18 17L31 3" stroke="#d39546" stroke-width="4"/></svg></span>
        <span class="ptool"><svg viewBox="0 0 32 32"><path d="M3 13v18h14" fill="none" stroke="#777" stroke-width="1.800"/><path d="M7 9v18h14V9z" fill="#eee" stroke="#777" stroke-width="1.800"/><path d="M12 4h14v18H12z" fill="#f3f3f3" stroke="#777" stroke-width="1.800"/><path d="M15 20V3q0-3 3-2v22" fill="none" stroke="#3f5d85" stroke-width="1.800"/><rect x="19" y="21" width="11" height="11" rx="2" fill="#589058"/><path d="M24.500 23v7M21 26.500h7" stroke="#fff" stroke-width="2.200"/></svg></span>
        <span class="ptool"><svg viewBox="0 0 34 32"><use href="#eye" x="0" y="4" width="32" height="24"/><path d="M23 23l5-1 6 1-5 9z" fill="#111"/></svg></span>
        <span class="ptool"><svg viewBox="0 0 32 32"><path d="M3 8h26L19 21v11l-5-2V21z" fill="#6793c9" stroke="#41668f" stroke-width="1.200"/><path d="M2 1h28v6H2z" fill="#f7d93c" stroke="#c8a204"/></svg></span>
        <span class="ptool pdrop"><svg viewBox="0 0 32 32"><path d="M14 4Q11 1 8 2 3 3 3 6t6 4Q2 11 2 16t7 5q4 0 6-4" fill="none" stroke="#5d3a68" stroke-width="2.400"/><path d="M14 20h14l-5 5v8h-4v-8z" fill="#eee" stroke="#888" stroke-width="1.600"/></svg><svg class="drop"><use href="#drop"/></svg></span>
        <span class="ptool"><svg viewBox="0 0 32 32"><use href="#expand"/></svg></span>
        <span class="ptool"><svg viewBox="0 0 32 32"><use href="#collapse"/></svg></span>
        <span class="ptool"><svg viewBox="0 0 32 32"><rect x="3" y="3" width="22" height="24" fill="#f0f0ee" stroke="#8a8a8a" stroke-width="1.800"/><rect x="19" y="22" width="12" height="10" rx="2" fill="#f04a4a"/><path d="M21 27h8" stroke="#fff" stroke-width="2.400"/></svg></span>
      </div>
      <div class="tree">
        <div class="node"><i class="fold"></i><svg class="check"><use href="#check"/></svg><span class="sym"><i class="dot purple"></i></span><span class="name bold faded">Indigenous Location</span></div>
        <div class="node selected"><i class="fold open"></i><svg class="check"><use href="#check"/></svg><span class="sym"><svg class="poly" viewBox="0 0 32 24"><path d="M3 3Q9 0 14 4 19 8 23 3 28 0 31 3 30 13 31 18 26 20 22 15 18 13 15 17 10 24 1 22 0 12 3 3z" fill="#d5dfec" stroke="#9fb1c8" stroke-width="1.200"/></svg></span><span class="name bold under">donor_src_SA1_aust_11</span></div>
        <div class="node sub"><svg class="check"><use href="#check"/></svg><i class="swatch c1"></i><span class="name">0.0000 - 6.0000</span></div>
        <div class="node sub"><svg class="check"><use href="#check"/></svg><i class="swatch c2"></i><span class="name">6.0000 - 12.0000</span></div>
        <div class="node sub"><svg class="check"><use href="#check"/></svg><i class="swatch c3"></i><span class="name">12.0000 - 17.0000</span></div>
        <div class="node sub"><svg class="check"><use href="#check"/></svg><i class="swatch c4"></i><span class="name">17.0000 - 25.0000</span></div>
        <div class="node sub"><svg class="check"><use href="#check"/></svg><i class="swatch c5"></i><span class="name">25.0000 - 746.0000</span></div>
        <div class="node"><i class="fold"></i><svg class="check"><use href="#check"/></svg><span class="sym"><i class="dot brown"></i></span><span class="name bold">Town and City</span></div>
      </div>
    </section>

    <section class="map">
      <svg viewBox="752 192 1552 1314" preserveAspectRatio="none">
        <rect x="752" y="192" width="1552" height="1314" fill="#cd4048"/>
        <g stroke="#260f10" stroke-width="1.900" fill="none">
          <path fill="#06b94f" d="M1363.500 357.500H2161V1387H1079V1383.500H1121V1295H1076.700V1270.200L1066.700 1264.400 1054.700 1263.300V1245.300H960.300V1256.800H924.700V1266H908.700V1287.400H865V1208.600H852.300V1157.700H870V1119H853.300V1123.600H830.700V1138H810.700V1130.500H797V1079L799 1078 800 1070.800H808V1066.600H832.300V976.600H884.700V980.800H957.300V959.800H999.300V948.700H1050V954.500H1065V966.300H1363.500Z"/>
          <path d="M752 358.500H1364M2161 192V1506M2161 280H2304M2161 486H2304M2161 829H2304M2161 961.500L2304 960M2161 1218.500H2304M752 1066.600H808"/>
          <path d="M1210 192L1194.300 200.700 1187.300 213.300 1183.300 219.300 1161.700 241.700 1160 246.700 1146.700 259.300 1129.300 270 1125.700 273.300 1116.700 288.300Q1108 286 1100 287L1086.700 292.300 1066.700 294.700 1033.300 304.300 1006.700 309.300 993.300 309 985 313.300 980.700 319.300V328.300L985 336 983.300 339.300 963.300 352.700 960.700 358"/>
          <path d="M752 1230.400H771V1280.900H835V1284.700H865"/>
          <path d="M788.700 1281V1303L797 1303.800V1308.800H800L801.300 1305H809.300L810 1308.800H833.300V1330.600L842.700 1331 843.300 1344 845 1345V1355H855.700L856.300 1366 862.700 1367V1386.900H944.300L946.700 1390 947.300 1397.600 951 1406 953.300 1413 958.300 1416.500H1009.300L1010 1399 1013.300 1398.400 1014 1385.800 1079 1386.500"/>
          <path d="M958.300 1416.500L959.700 1446.600H941V1462.700H925.300V1473H902.700V1464.200H884V1438.600H850.700V1415.200H831.700V1404H817V1413.700L759 1414.800V1401H752"/>
          <path fill="#06b94f" d="M2170 618l3-2h14l1 5-7 3-6 3-5-3z"/>
          <path d="M1927 241l9 1 1 7-4 1-1-2-5 2z"/>
          <path fill="#cd4048" d="M1032 1200l7-8 3 1-3 5-6 3z"/>
          <path d="M944 1310l8-3 2 6-5-1v2z"/>
          <path fill="#a86f94" d="M2183 860l5-3 2 1-3 4-4 2z"/>
          <path fill="#046a0a" d="M1710 854l5-3 8 6-2 3-9-2z"/>
        </g>
        <g fill="#331416"><path d="M978 241h2v-2h2v2h2v3h-2v2h-2v-2h-2zM2228 326h4l2 3h-3zM902 1342l4-2 4 2-4 3zM1808 1442h3l1 3h-3zM2187 848h5v5h-5zM2142 840l4-2 3 2v5h-3zM1914 802l3-5 3 5v3h-5zM1890 694h5l2 4v4h-3zM2026 642h3l2 5h-2z"/></g>
        <g class="place"><text x="1715" y="880">Warburton</text><text x="1914" y="830">Mantamaru</text><text x="946" y="1339">Laverton</text></g>
        <path d="M2027 825h3v5h-3z" fill="#b58a9a"/>
      </svg>
    </section>

    <section class="panel identify">
      <div class="panel-head"><svg class="round"><use href="#close"/></svg><svg class="round"><use href="#float"/></svg><h2 class="panel-title">Identify Results</h2></div>
      <div class="panel-tools">
        <span class="ptool"><svg viewBox="0 0 32 32"><use href="#expand"/></svg></span>
        <span class="ptool"><svg viewBox="0 0 32 32"><use href="#collapse"/></svg></span>
        <span class="ptool"><svg viewBox="0 0 32 32"><use href="#expand" x="1"/><path d="M10.500 0l3 7 7 1-5 5 1 8-6-3-6 3 1-8-5-5 7-1z" fill="#ffe81a" stroke="#fff" stroke-width="4"/><path d="M10.500 2l2.500 6 6 .5-4.500 4.500 1 6-5-2.500L5.500 19l1-6L2 8.500 8 8z" fill="#ffe81a" stroke="#f59a1c" stroke-width="1.800"/></svg></span>
        <span class="ptool"><svg viewBox="0 0 32 32"><path d="M1 8h6v5H1zM1 22h6v5H1z" fill="#8a8a8a"/><path d="M7 10.500h3M7 24.500h3" stroke="#8a8a8a" stroke-width="2"/><path d="M10 6h20v9H10zM10 20h20v9H10z" fill="#eee" stroke="#999" stroke-width="1.800"/><path d="M13 10.500h12M13 24.500h13" stroke="#3f648f" stroke-width="2.400"/></svg></span>
        <span class="ptool"><svg viewBox="0 0 32 32"><rect x="1" y="3" width="18" height="18" fill="#fbe74d" stroke="#c8a204" stroke-width="1.600"/><rect x="16" y="18" width="13" height="13" rx="2" fill="#fff" stroke="#d8252a" stroke-width="1.500"/><circle cx="22.500" cy="24.500" r="4" fill="none" stroke="#d8252a" stroke-width="2"/><path d="M20 28l5-7" stroke="#d8252a" stroke-width="2"/></svg></span>
        <span class="ptool soft"><svg viewBox="3 0 44 46"><use href="#pages" width="48" height="48"/></svg></span>
        <span class="ptool dim"><svg viewBox="0 0 32 32"><path d="M9 2h12v10H9z" fill="#fafafa" stroke="#aaa"/><rect x="1" y="11" width="28" height="12" rx="4" fill="#6c96c4"/><path d="M9 19h12v12H9z" fill="#fafafa" stroke="#aaa"/></svg></span>
      </div>
      <div class="results">
        <div class="res-head"><span class="cell">Feature</span><span class="val">Value</span></div>
        <div class="res-rows">
          <div class="row lvl0"><i class="tri down"></i><span class="cell">donor_src_SA1_aust…</span></div>
          <div class="row lvl1 selected"><i class="tri down"></i><span class="cell">SA1_7DIG11</span><span class="val">5120305</span></div>
          <div class="row lvl2"><i class="tri side"></i><span class="cell">(Derived)</span></div>
          <div class="row lvl2"><i class="tri side"></i><span class="cell">(Actions)</span></div>
          <div class="row lvl2"><i class="tri"></i><span class="cell">SA1_7DIG11</span><span class="val">5120305</span></div>
          <div class="row lvl2"><i class="tri"></i><span class="cell">SA1_MAIN11</span><span class="val">50803120305</span></div>
          <div class="row lvl2"><i class="tri"></i><span class="cell">NeedAssist</span><span class="val">13</span></div>
          <div class="row lvl2"><i class="tri"></i><span class="cell">TotP</span><span class="val">303</span></div>
        </div>
      </div>
      <div class="form mode"><span class="lbl">Mode</span><div class="combo"><span class="lbl">Current layer</span><span class="knob"><svg><use href="#updown"/></svg></span></div><i class="emptybox"></i><span class="lbl auto">Auto open form</span></div>
      <div class="form view"><span class="lbl muted">View</span><div class="combo off"><span class="lbl">Tree</span><span class="knob"><svg><use href="#updown"/></svg></span></div><button class="help"><span class="lbl">Help</span></button></div>
    </section>
  </main>

  <footer class="status">
    <span class="lbl coord">Coordinate</span>
    <span class="field coordval"><span class="lbl">126.30,-24.50</span></span>
    <span class="sbtn mouse"><svg viewBox="0 0 32 36"><path d="M5 6l11 2 10 15q2 9-5 10-7 0-9-6L4 12z" fill="#f2f2f2" stroke="#333" stroke-width="2"/><path d="M8 6l12 20M13 7l11 18M4 10l13 21M20 14q1-9 9-12M2 26l7-2M2 20l6 12" stroke="#333" stroke-width="2.200" fill="none"/><circle cx="21" cy="28" r="4" fill="#fff" stroke="#333" stroke-width="1.800"/></svg></span>
    <span class="lbl scale">Scale</span>
    <span class="field scaleval"><span class="lbl">1:2,423,224</span><span class="knob"><svg viewBox="0 0 16 16"><path d="M3 5l5 6 5-6" fill="none" stroke="#fff" stroke-width="2.600"/></svg></span></span>
    <span class="sbtn lock"><svg viewBox="0 0 32 36"><path d="M8 18v-7q0-9 8-9t8 9v7" fill="none" stroke="#888" stroke-width="4"/><path d="M8 18v-7q0-9 8-9t8 9v7" fill="none" stroke="#eee" stroke-width="1.500"/><rect x="4" y="17" width="24" height="17" rx="2" fill="#666"/></svg></span>
    <span class="lbl mag">Magnifier</span>
    <span class="field num"><span class="lbl">100%</span></span>
    <span class="stepper"><svg><use href="#updown"/></svg></span>
    <span class="lbl rot">Rotation</span>
    <span class="field num"><span class="lbl">0.0</span></span>
    <span class="stepper"><svg><use href="#updown"/></svg></span>
    <svg class="check render"><use href="#check"/></svg>
    <span class="lbl rendertxt">Render</span>
    <span class="flat epsg"><svg viewBox="0 0 30 32"><circle cx="15" cy="16" r="12.500" fill="#ddd" stroke="#333" stroke-width="4"/><circle cx="15" cy="16" r="6.500" fill="none" stroke="#555" stroke-width="2.500"/><path d="M2 16h7M21 16h7M15 0v9M15 23v9M8 8q7 5 14 0M8 24q7-5 14 0" stroke="#333" stroke-width="2.500" fill="none"/></svg><span class="lbl">EPSG:4823 (OTF)</span></span>
    <span class="flat msg"><svg viewBox="0 0 32 32"><path d="M16 1q15 1 15 13 0 7-5 10l3 7-8-5Q1 28 1 14 2 2 16 1z" fill="#666"/><path d="M7 14h4M14 14h4M21 14h4" stroke="#fff" stroke-width="4"/></svg></span>
    <svg class="resize" viewBox="0 0 22 22"><path d="M0 22L22 0M8 22L22 8M16 22l6-6" stroke="#777" stroke-width="2"/></svg>
  </footer>
</div>
<div class="behind"><i class="behind-a"></i><i class="behind-b"></i></div>
</body>
</html>
```

FILE: styles.css
```css
* { box-sizing: border-box; }
body {
  margin: 0;
  width: 2870px;
  height: 1608px;
  overflow: hidden;
  background: #252e48;
  font-family: "Liberation Sans", Arial, sans-serif;
  font-size: 26px;
  line-height: 30px;
  color: #0c0c0c;
  padding-top: 3px;
}
.defs { display: block; position: absolute; }
svg { display: block; flex: none; }
i { display: block; flex: none; }
h1, h2 { margin: 0; font-weight: normal; }

.window {
  height: 1594px;
  display: flex;
  flex-direction: column;
  background: #ebebeb;
  border-radius: 9px 9px 0 0;
  border-bottom: 2px solid #8f8f8f;
  overflow: hidden;
}

.titlebar {
  height: 43px;
  flex: none;
  display: grid;
  grid-template-columns: 1fr auto 1fr;
  align-items: center;
  background: linear-gradient(#fdfdfd 0, #ececec 3px, #d4d4d4 100%);
}
.lights { display: flex; gap: 16px; padding-left: 14px; }
.light { width: 24px; height: 24px; border-radius: 50%; }
.red { background: #ee6a5e; border: 1px solid #d8584d; }
.amber { background: #f5bd4f; border: 1px solid #dba33f; }
.green { background: #61c654; border: 1px solid #4caa3f; }
.window-title { font-size: 26px; letter-spacing: .68px; color: #484848; padding-bottom: 1px; }

.toolbar {
  height: 72px;
  flex: none;
  display: flex;
  border-top: 2px solid #fff;
  border-bottom: 2px solid #adadad;
  background: linear-gradient(#f0f0f0, #c6c6c6);
}
.slot { width: 18px; padding: 10px 0 0 12px; flex: none; }
.grip { width: 12px; height: 48px; overflow: visible; }
.btn { width: 76px; flex: none; display: flex; justify-content: center; align-items: center; }
.wide { width: 100px; justify-content: flex-start; padding-left: 26px; gap: 4px; }
.icon { width: 48px; height: 48px; overflow: visible; }
.drop { width: 16px; height: 15px; align-self: flex-end; }
.wide .drop { margin-bottom: 15px; }
.dim { opacity: .55; }
.gear { opacity: .6; }
.soft { opacity: .75; }
.btn.pressed { width: 66px; margin: 0 5px; background: linear-gradient(#d8d8d8, #a4a4a4); border: solid #8f8f8f; border-width: 0 1px; }
.one { font: bold 17px "Liberation Sans", sans-serif; fill: #555; }
.info { font: italic bold 30px "Liberation Serif", serif; fill: #fff; }
.tee { font: bold 29px "Liberation Serif", serif; fill: #555; }
.qmark { font: 32px "Liberation Serif", serif; fill: #fff; }
.abc { font: bold 16px "Liberation Sans", sans-serif; fill: #333; }
.csw { font: bold 17px "DejaVu Sans Mono", monospace; fill: #555; }

.workspace { height: 1318px; flex: none; display: flex; }

.sidebar {
  width: 96px;
  border-right: 3px solid #b0b0b0;
  background: linear-gradient(90deg, #f1f1f1, #c6c6c6);
  padding-top: 13px;
}
.hgrip { width: 74px; height: 12px; margin: 0 0 9px 12px; }
.hgrip.last { margin-top: -4px; }
.side-item { height: 76px; padding-left: 10px; display: flex; gap: 4px; align-items: flex-start; }
.side-item.shifted { padding-left: 22px; }
.side-item .drop { align-self: flex-start; margin-top: 29px; }

.panel { display: flex; flex-direction: column; }
.layers { width: 652px; border-right: 2px solid #b0b0b0; }
.identify { width: 562px; flex: none; border-right: 2px solid #b8b8b8; }
.panel-head {
  height: 52px;
  flex: none;
  display: flex;
  align-items: center;
  padding: 0 0 4px 4px;
  gap: 12px;
  background: linear-gradient(#ededed, #c9c9c9);
  border-top: 2px solid #fff;
  border-bottom: 2px solid #adadad;
}
.identify .panel-head { padding-left: 6px; }
.round { width: 28px; height: 28px; }
.panel-title { flex: 1; text-align: center; font-size: 22px; }
.layers .panel-title { margin-right: 6px; }
.identify .panel-title { margin-right: 6px; }
.panel-tools {
  height: 58px;
  flex: none;
  display: flex;
  align-items: center;
  background: linear-gradient(#ededed, #c9c9c9);
  border-top: 2px solid #fafafa;
  border-bottom: 3px solid #999;
}
.panel-tools .ptool { width: 60px; flex: none; display: flex; justify-content: center; margin-top: -1px; }
.layers .ptool:first-child { margin-left: -4px; }
.ptool svg { width: 32px; height: 32px; }
.ptool svg.drop { width: 16px; height: 15px; }
.panel-tools .pdrop { width: 85px; justify-content: flex-start; padding-left: 30px; }

.tree { flex: 1; background: #fff; border-bottom: 2px solid #b0b0b0; }
.node { height: 40px; display: flex; align-items: center; padding-left: 12px; }
.node.sub { padding-left: 94px; }
.node.selected, .row.selected { background: #084fd1; color: #fff; }
.fold { width: 18px; height: 15px; margin-right: 24px; }
.fold.open { background: #909090; clip-path: polygon(0 0, 100% 0, 50% 100%); }
.check { width: 28px; height: 28px; }
.sym { width: 70px; padding-left: 26px; }
.dot { width: 10px; height: 10px; border-radius: 50%; margin-left: 11px; border: 1px solid #4a4050; }
.purple { background: #7d2aa0; }
.brown { background: #743742; }
.poly { width: 32px; height: 24px; margin-bottom: 4px; }
.name { padding-bottom: 3px; white-space: nowrap; }
.bold { font-weight: bold; }
.faded { color: #c3c3c3; }
.under { text-decoration: underline; text-decoration-thickness: 2px; text-underline-offset: 3px; text-decoration-skip-ink: none; }
.swatch { width: 36px; height: 36px; margin: 0 19px 0 26px; border: 2px solid rgba(0, 0, 0, .42); }
.c1 { background-color: #cd4048; }
.c2 { background-color: #df7aa8; }
.c3 { background-color: #06b94f; }
.c4 { background-color: #08a324; }
.c5 { background-color: #056c05; }

.map { width: 1560px; flex: none; border: solid #8f8f8f; border-width: 2px 4px; border-bottom-color: #b0b0b0; }
.map svg { width: 1552px; height: 1314px; }
.place { font-size: 26px; fill: #fff; fill-opacity: .93; }

.results { height: 1062px; flex: none; margin-left: 2px; border-bottom: 2px solid #b8b8b8; display: flex; flex-direction: column; }
.res-head { height: 34px; flex: none; display: flex; background: #f5f5f5; border-bottom: 2px solid #d2d2d2; padding: 0 0 2px 9px; align-items: center; }
.res-head .cell { width: 321px; border-right: 2px solid #d6d6d6; line-height: 26px; }
.res-head .val { padding-left: 9px; }
.res-rows { flex: 1; background: repeating-linear-gradient(#fff 0 30px, #ebf2fe 30px 60px); background-size: 100% 1020px; background-repeat: no-repeat; background-color: #fff; }
.row { height: 30px; display: flex; align-items: center; }
.row .cell, .row .val { line-height: 30px; padding-bottom: 3px; white-space: nowrap; }
.row .cell { flex: none; }
.lvl0 { padding-left: 12px; }
.lvl1 { padding-left: 52px; }
.lvl2 { padding-left: 92px; }
.lvl1 .cell { width: 249px; }
.lvl2 .cell { width: 210px; }
.tri { width: 18px; height: 16px; margin-right: 20px; }
.down { background: #8f8f8f; clip-path: polygon(0 0, 100% 0, 50% 100%); }
.side { background: #8f8f8f; clip-path: polygon(11% 0, 94% 50%, 11% 100%); }

.lbl { white-space: nowrap; position: relative; top: -2px; }
.form { display: flex; align-items: center; padding-left: 10px; }
.mode { height: 60px; }
.mode > .lbl, .view > .lbl { top: -1px; }
.view { height: 62px; margin-top: 8px; }
.combo {
  width: 240px;
  height: 42px;
  margin-left: 11px;
  padding-left: 15px;
  display: flex;
  align-items: center;
  justify-content: space-between;
  border: 2px solid #c2c2c2;
  border-right: 0;
  border-radius: 8px;
  background: #fff;
}
.combo .lbl { top: -1px; }
.combo .knob { width: 34px; height: 42px; border-radius: 0 8px 8px 0; background: linear-gradient(#6ea3f8, #1c66fb); color: #fff; display: flex; align-items: center; justify-content: center; }
.knob svg { width: 16px; height: 28px; }
.combo.off { width: 198px; margin-left: 10px; background: #f5f5f5; border: 2px solid #d2d2d2; color: #888; }
.combo.off .knob { background: none; color: #888; }
.muted { color: #444; }
.emptybox { width: 28px; height: 28px; margin: 0 7px 0 12px; border: 2px solid #c0c0c0; border-radius: 6px; background: #fff; }
.help { margin-left: 188px; width: 90px; height: 46px; padding: 0; font: inherit; color: inherit; border: 2px solid #adadad; background: linear-gradient(#e4e4e4, #f4f4f4); }

.status { height: 87px; flex: none; display: flex; align-items: center; background: linear-gradient(#ececec 60%, #dedede); position: relative; }
.status > .lbl { top: -2px; flex: none; }
.coord { margin-left: 889px; width: 139px; }
.field { flex: none; display: flex; align-items: center; background: #fff; }
.field .lbl { top: 1px; }
.coordval { width: 246px; height: 34px; justify-content: center; margin-right: 4px; }
.coordval .lbl { left: -2px; top: -1px; }
.sbtn { width: 52px; height: 52px; flex: none; display: flex; align-items: center; justify-content: center; border: 2px solid #adadad; background: #e9e9e9; }
.sbtn svg { width: 32px; height: 36px; }
.scale { margin-left: 18px; width: 72px; }
.scaleval { width: 235px; height: 46px; border: 2px solid #b5b5b5; border-right: 0; border-bottom-color: #f4f4f4; padding-left: 4px; justify-content: space-between; margin-right: 1px; margin-top: -4px; }
.scaleval .knob { width: 35px; height: 44px; margin-top: -2px; border-radius: 0 8px 8px 0; background: linear-gradient(#6ea3f8, #1c66fb); display: flex; align-items: center; justify-content: center; }
.scaleval .knob svg { height: 16px; }
.lock { margin-top: -4px; }
.mag { margin-left: 18px; width: 116px; }
.num { width: 128px; height: 44px; border: 2px solid #b5b5b5; padding-left: 6px; }
.stepper { width: 26px; height: 44px; flex: none; margin-left: 6px; border: 2px solid #c8c8c8; border-radius: 13px; background: #fff; color: #333; display: flex; align-items: center; justify-content: center; }
.stepper svg { width: 16px; height: 36px; }
.rot { margin-left: 20px; width: 118px; }
.render { margin-left: 14px; }
.rendertxt { margin-left: 8px; width: 90px; }
.flat { height: 37px; flex: none; display: flex; align-items: center; border: 2px solid #adadad; background: linear-gradient(#e2e2e2, #f2f2f2 60%, #e8e8e8); }
.flat svg { width: 30px; height: 32px; }
.epsg { width: 290px; padding-left: 9px; gap: 9px; }
.msg { width: 76px; margin-left: 12px; padding-left: 8px; }
.resize { width: 22px; height: 22px; position: absolute; right: 0; bottom: 0; }

.behind { height: 11px; display: flex; background: #070a12; }
.behind-a { width: 252px; background: #a2a2a2; border-right: 2px solid #666; }
.behind-b { width: 2590px; background: #a2a2a2; border-radius: 0 0 10px 0; }
```
